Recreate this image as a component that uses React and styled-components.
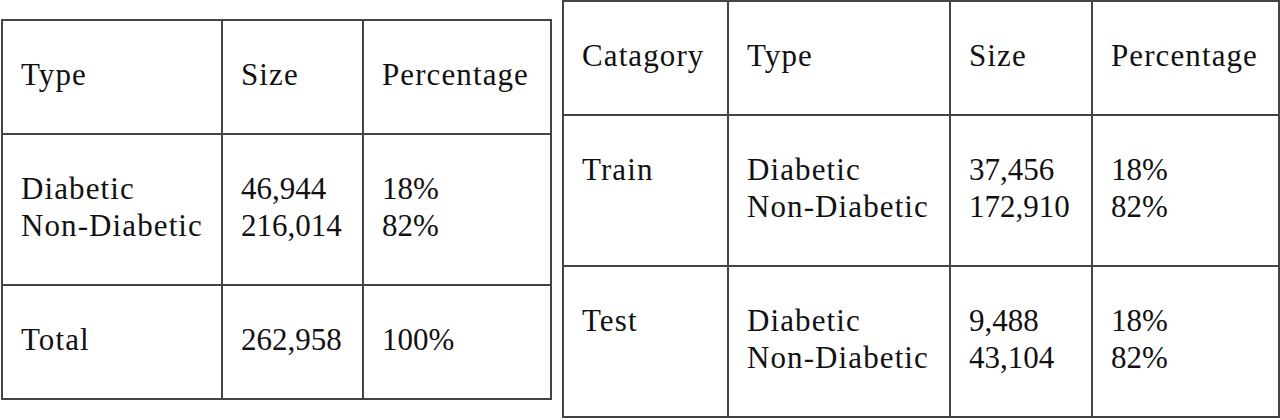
import styled, { createGlobalStyle } from "styled-components"

const GlobalStyle = createGlobalStyle`
  body {
    margin: 0;
    background: #fff;
    font-family: "Liberation Serif", "Times New Roman", serif;
    color: #111;
  }
`

const Page = styled.div`
  display: flex;
  flex-direction: row;
  align-items: flex-start;
  gap: 10px;
  width: 1280px;
  height: 420px;
  overflow: hidden;
`

const Table = styled.table`
  border-collapse: collapse;
  table-layout: fixed;
  margin-top: ${(props) => props.$top || 0}px;
  margin-left: ${(props) => props.$left || 0}px;
  font-size: 31px;
  line-height: 37px;
`

const Cell = styled.td`
  border: 2px solid #444;
  padding: 35px 18px 40px 18px;
  vertical-align: top;
  text-align: left;
  font-weight: normal;
  letter-spacing: ${(props) => (props.$num ? "0" : "1.1px")};
  white-space: nowrap;
`

const Line = styled.div``

function Lines({ items }) {
  return items.map((item) => <Line key={item}>{item}</Line>)
}

const leftWidths = [220, 141, 188]
const rightWidths = [165, 222, 142, 187]

function Cols({ widths }) {
  return (
    <colgroup>
      {widths.map((w, i) => <col key={i} style={{ width: w }} />)}
    </colgroup>
  )
}

function App() {
  return (
    <>
      <GlobalStyle />
      <Page>
        <Table $top={19} $left={1}>
          <Cols widths={leftWidths} />
          <tbody>
            <tr>
              <Cell>Type</Cell>
              <Cell>Size</Cell>
              <Cell>Percentage</Cell>
            </tr>
            <tr>
              <Cell><Lines items={["Diabetic", "Non-Diabetic"]} /></Cell>
              <Cell $num><Lines items={["46,944", "216,014"]} /></Cell>
              <Cell $num><Lines items={["18%", "82%"]} /></Cell>
            </tr>
            <tr>
              <Cell>Total</Cell>
              <Cell $num>262,958</Cell>
              <Cell $num>100%</Cell>
            </tr>
          </tbody>
        </Table>

        <Table>
          <Cols widths={rightWidths} />
          <tbody>
            <tr>
              <Cell>Catagory</Cell>
              <Cell>Type</Cell>
              <Cell>Size</Cell>
              <Cell>Percentage</Cell>
            </tr>
            <tr>
              <Cell>Train</Cell>
              <Cell><Lines items={["Diabetic", "Non-Diabetic"]} /></Cell>
              <Cell $num><Lines items={["37,456", "172,910"]} /></Cell>
              <Cell $num><Lines items={["18%", "82%"]} /></Cell>
            </tr>
            <tr>
              <Cell>Test</Cell>
              <Cell><Lines items={["Diabetic", "Non-Diabetic"]} /></Cell>
              <Cell $num><Lines items={["9,488", "43,104"]} /></Cell>
              <Cell $num><Lines items={["18%", "82%"]} /></Cell>
            </tr>
          </tbody>
        </Table>
      </Page>
    </>
  )
}

export default App
